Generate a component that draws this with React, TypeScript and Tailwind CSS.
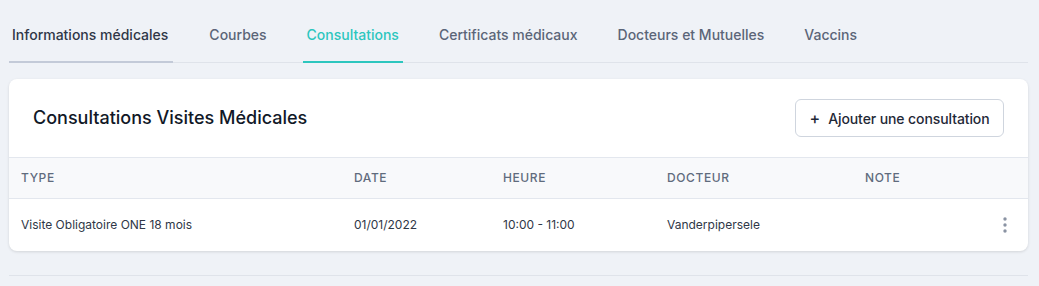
import React from "react";

const tabs = [
  { label: "Informations médicales", state: "visited" },
  { label: "Courbes", state: "" },
  { label: "Consultations", state: "active" },
  { label: "Certificats médicaux", state: "" },
  { label: "Docteurs et Mutuelles", state: "" },
  { label: "Vaccins", state: "" },
];

export default function App() {
  return (
    <div
      className="min-h-[286px] bg-[#eff2f7] pl-[9px] pr-[11px]"
      style={{ fontFamily: "Inter, 'Noto Sans', sans-serif" }}
    >
      <div className="flex gap-[32px] border-b border-[#dfe3ea]">
        {tabs.map((t) => (
          <div
            key={t.label}
            className={
              "-mb-px pt-[25px] pb-[16px] text-[14px] leading-5 font-medium border-b-2 " +
              (t.state === "active"
                ? "border-[#2dc6be] text-[#2dc6be] px-[4px]"
                : t.state === "visited"
                ? "border-[#c3cad8] text-[#2f3747] pl-[3px] pr-[5px]"
                : "border-transparent text-[#5b6578] px-[4px]")
            }
          >
            {t.label}
          </div>
        ))}
      </div>

      <div className="mt-[16px] rounded-lg bg-white shadow-[0_1px_3px_rgba(0,0,0,0.12)] overflow-hidden">
        <div className="flex items-center justify-between px-6 py-5">
          <h2 className="text-[18px] leading-7 font-medium text-[#111827]">
            Consultations Visites Médicales
          </h2>
          <button className="flex h-[38px] w-[209px] items-center justify-center gap-[8px] rounded-md border border-[#cfd5de] bg-white text-[14px] font-medium text-[#1f2937]">
            <span className="text-[16px] leading-none">+</span>
            <span className="tracking-[-0.1px]">Ajouter une consultation</span>
          </button>
        </div>
        <div className="grid grid-cols-[333px_149px_164px_198px_1fr_40px] border-y border-[#e3e7ee] bg-[#f8f9fb] h-[42px] items-center text-[12px] font-medium uppercase tracking-wider text-[#5f6b7d]">
          <div className="pl-3">Type</div>
          <div className="pl-3">Date</div>
          <div className="pl-3">Heure</div>
          <div className="pl-3">Docteur</div>
          <div className="pl-3">Note</div>
          <div></div>
        </div>
        <div className="grid grid-cols-[333px_149px_164px_198px_1fr_40px] h-[52px] items-center text-[12px] text-[#2f3747]">
          <div className="pl-3">Visite Obligatoire ONE 18 mois</div>
          <div className="pl-3">01/01/2022</div>
          <div className="pl-3">10:00 - 11:00</div>
          <div className="pl-3">Vanderpipersele</div>
          <div className="pl-3"></div>
          <div className="flex justify-start pl-[15px]">
            <svg width="4" height="16" viewBox="0 0 4 16" fill="#8a93a3">
              <circle cx="2" cy="2" r="1.7" />
              <circle cx="2" cy="8" r="1.7" />
              <circle cx="2" cy="14" r="1.7" />
            </svg>
          </div>
        </div>
      </div>

      <div className="mt-[24px] border-t border-[#dfe3ea]"></div>
    </div>
  );
}
